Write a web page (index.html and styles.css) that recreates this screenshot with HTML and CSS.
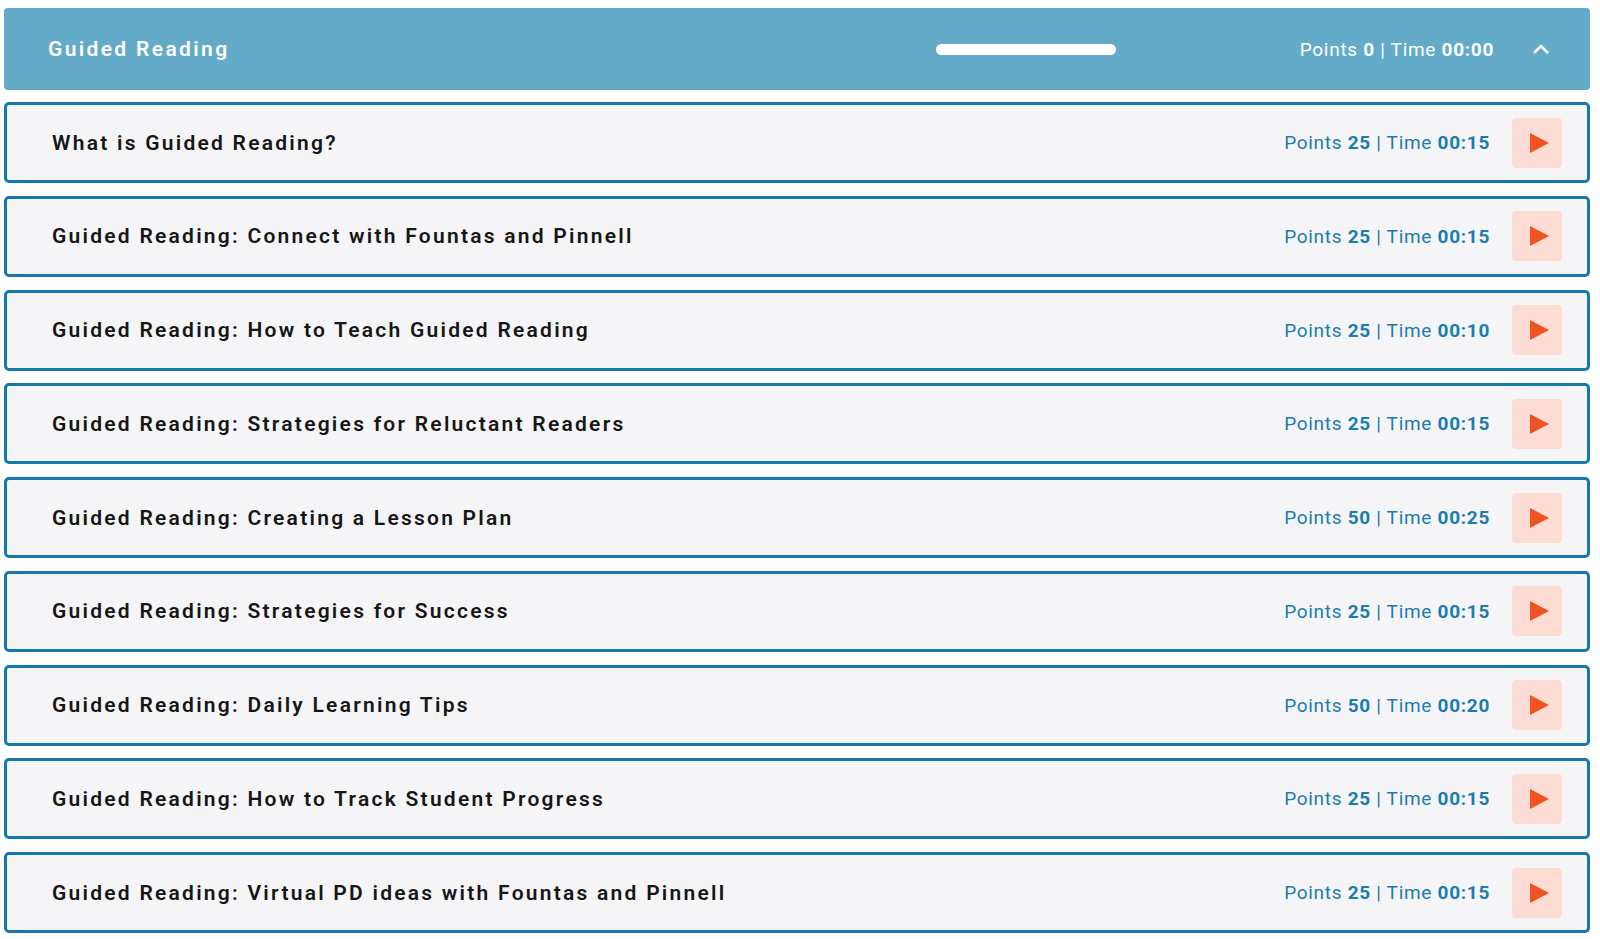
FILE: index.html
```html
<!DOCTYPE html>
<html lang="en">

<head>
    <meta charset="UTF-8">
    <meta name="viewport" content="width=device-width, initial-scale=1.0">
    <title>Guided Reading</title>
    <link rel="stylesheet" href="styles.css">
</head>

<body>
    <div class="course">
        <div class="course-header">
            <h1 class="course-title">Guided Reading</h1>
            <div class="progress"></div>
            <div class="header-stats">Points <b>0</b> | Time <b>00:00</b></div>
            <button class="collapse" aria-label="Collapse">
                <svg width="18" height="12" viewBox="0 0 18 12"><path d="M2 10 L9 3 L16 10" fill="none" stroke="#fff" stroke-width="2.6"/></svg>
            </button>
        </div>

        <div class="lessons">
            <div class="lesson">
                <span class="lesson-title">What is Guided Reading?</span>
                <span class="lesson-stats">Points <b>25</b> | Time <b>00:15</b></span>
                <button class="play" aria-label="Play"><span class="triangle"></span></button>
            </div>
            <div class="lesson">
                <span class="lesson-title">Guided Reading: Connect with Fountas and Pinnell</span>
                <span class="lesson-stats">Points <b>25</b> | Time <b>00:15</b></span>
                <button class="play" aria-label="Play"><span class="triangle"></span></button>
            </div>
            <div class="lesson">
                <span class="lesson-title">Guided Reading: How to Teach Guided Reading</span>
                <span class="lesson-stats">Points <b>25</b> | Time <b>00:10</b></span>
                <button class="play" aria-label="Play"><span class="triangle"></span></button>
            </div>
            <div class="lesson">
                <span class="lesson-title">Guided Reading: Strategies for Reluctant Readers</span>
                <span class="lesson-stats">Points <b>25</b> | Time <b>00:15</b></span>
                <button class="play" aria-label="Play"><span class="triangle"></span></button>
            </div>
            <div class="lesson">
                <span class="lesson-title">Guided Reading: Creating a Lesson Plan</span>
                <span class="lesson-stats">Points <b>50</b> | Time <b>00:25</b></span>
                <button class="play" aria-label="Play"><span class="triangle"></span></button>
            </div>
            <div class="lesson">
                <span class="lesson-title">Guided Reading: Strategies for Success</span>
                <span class="lesson-stats">Points <b>25</b> | Time <b>00:15</b></span>
                <button class="play" aria-label="Play"><span class="triangle"></span></button>
            </div>
            <div class="lesson">
                <span class="lesson-title">Guided Reading: Daily Learning Tips</span>
                <span class="lesson-stats">Points <b>50</b> | Time <b>00:20</b></span>
                <button class="play" aria-label="Play"><span class="triangle"></span></button>
            </div>
            <div class="lesson">
                <span class="lesson-title">Guided Reading: How to Track Student Progress</span>
                <span class="lesson-stats">Points <b>25</b> | Time <b>00:15</b></span>
                <button class="play" aria-label="Play"><span class="triangle"></span></button>
            </div>
            <div class="lesson">
                <span class="lesson-title">Guided Reading: Virtual PD ideas with Fountas and Pinnell</span>
                <span class="lesson-stats">Points <b>25</b> | Time <b>00:15</b></span>
                <button class="play" aria-label="Play"><span class="triangle"></span></button>
            </div>
        </div>
    </div>
</body>

</html>
```

FILE: styles.css
```css
body {
    font-family: Roboto, 'Liberation Sans', Arial, sans-serif;
    background-color: #fff;
    margin: 0;
    padding: 0;
}

.course {
    padding: 8px 10px 0 4px;
}

.course-header {
    display: flex;
    align-items: center;
    height: 82px;
    background-color: #63abc9;
    border-radius: 4px;
    padding: 0 40px 0 44px;
    box-sizing: border-box;
    color: #fff;
}

.course-title {
    margin: 0;
    font-size: 21px;
    font-weight: 600;
    letter-spacing: 2.35px;
    flex: 1;
}

.progress {
    width: 180px;
    height: 11px;
    border-radius: 6px;
    background-color: #fff;
    margin-right: 184px;
}

.header-stats {
    font-size: 19px;
    letter-spacing: 0.7px;
}

.header-stats b,
.lesson-stats b {
    font-weight: 700;
}

.collapse {
    background: none;
    border: none;
    padding: 0;
    margin-left: 38px;
    display: flex;
    cursor: pointer;
}

.lessons {
    display: flex;
    flex-direction: column;
    gap: 12.75px;
    margin-top: 12px;
}

.lesson {
    display: flex;
    align-items: center;
    height: 81px;
    box-sizing: border-box;
    background-color: #f5f5f8;
    border: 3px solid #1479ad;
    border-radius: 5px;
    padding: 0 25px 0 45px;
}

.lesson-title {
    flex: 1;
    font-size: 21px;
    font-weight: 600;
    letter-spacing: 2.25px;
    color: #161616;
}

.lesson-stats {
    font-size: 19px;
    color: #1a7cb0;
    letter-spacing: 0.7px;
    margin-right: 22px;
}

.play {
    width: 50px;
    height: 50px;
    border: none;
    border-radius: 4px;
    background-color: #fddcd3;
    display: flex;
    align-items: center;
    justify-content: center;
    cursor: pointer;
    padding: 0;
}

.triangle {
    width: 0;
    height: 0;
    border-top: 10px solid transparent;
    border-bottom: 10px solid transparent;
    border-left: 19px solid #f05323;
    margin-left: 4px;
}
```
